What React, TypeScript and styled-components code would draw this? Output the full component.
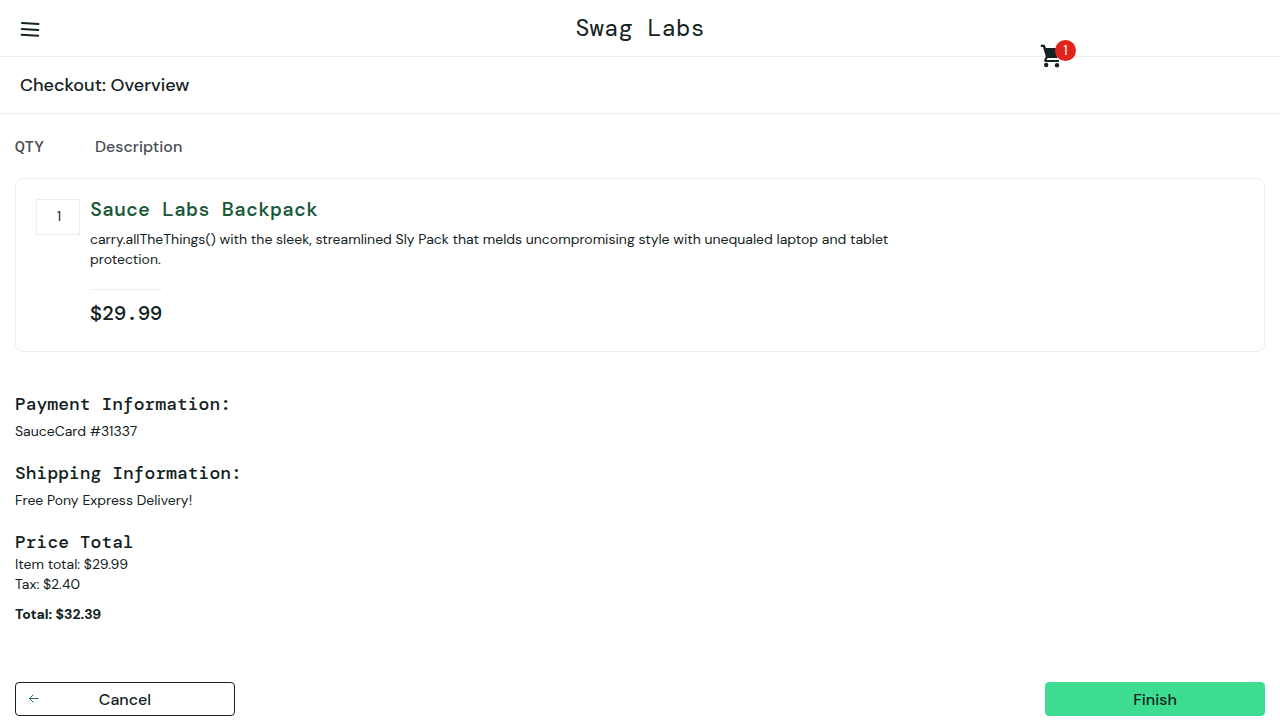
import React from "react";
import styled, { createGlobalStyle } from "styled-components";

const ink = "#132322";
const line = "#ededed";
const sans = `"DM Sans", Inter, "Liberation Sans", sans-serif`;
const mono = `"DM Mono", "Liberation Mono", monospace`;

const GlobalStyle = createGlobalStyle`
  *, *::before, *::after { box-sizing: border-box; }
  body {
    margin: 0;
    background: #fff;
    color: ${ink};
    font-family: ${sans};
    font-size: 14px;
    line-height: 20px;
  }
  h1, h2, h3, p { margin: 0; }
`;

const Header = styled.header`
  position: relative;
  display: grid;
  grid-template-columns: 1fr auto 1fr;
  align-items: center;
  height: 57px;
  padding: 0 20px;
  border-bottom: 1px solid ${line};
`;

const MenuButton = styled.button`
  justify-self: start;
  display: flex;
  margin-top: 2px;
  padding: 0;
  border: 0;
  background: none;
  cursor: pointer;
`;

const Logo = styled.div`
  font-family: ${mono};
  font-size: 24px;
  line-height: 32px;
`;

const CartLink = styled.a`
  position: absolute;
  top: 40px;
  right: 200px;
  width: 40px;
  height: 30px;
  color: ${ink};
  text-decoration: none;

  svg { display: block; margin-top: 4px; }
`;

const CartBadge = styled.span`
  position: absolute;
  top: 0;
  left: 15px;
  width: 21px;
  height: 21px;
  border-radius: 50%;
  background: #e2231a;
  color: #fff;
  line-height: 21px;
  text-align: center;
`;

const SubHeader = styled.div`
  display: flex;
  align-items: center;
  height: 57px;
  padding: 0 20px;
  border-bottom: 1px solid ${line};
`;

const PageTitle = styled.h1`
  font-size: 18px;
  line-height: 24px;
  font-weight: 500;
`;

const Main = styled.main`
  padding: 0 15px 4px;
`;

const ColumnLabels = styled.div`
  display: flex;
  padding: 23px 0 21px;
  color: #484c55;
  font-size: 16px;
  font-weight: 500;
`;

const QuantityLabel = styled.div`
  width: 80px;
  font-family: ${mono};
`;

const Item = styled.article`
  display: flex;
  align-items: flex-start;
  gap: 10px;
  padding: 20px;
  border: 1px solid ${line};
  border-radius: 8px;
`;

const Quantity = styled.div`
  flex: none;
  width: 44px;
  padding: 6px 10px 8px 12px;
  border: 1px solid ${line};
  text-align: center;
`;

const ItemBody = styled.div`
  max-width: 820px;
`;

const ItemLink = styled.a`
  display: block;
  color: #185837;
  font-family: ${mono};
  font-size: 20px;
  font-weight: 500;
  text-decoration: none;
`;

const Blurb = styled.p`
  padding: 10px 0 20px;
`;

const Price = styled.div`
  width: fit-content;
  padding: 13px 0 8px;
  border-top: 1px solid ${line};
  font-family: ${mono};
  font-size: 20px;
  font-weight: 500;
`;

const Summary = styled.div`
  padding: 42px 0 58px;
`;

const Section = styled.section<{ $gap: number }>`
  display: flex;
  flex-direction: column;

  & + & { margin-top: 22px; }
  h2 { margin-bottom: ${(p) => p.$gap}px; }
`;

const SectionTitle = styled.h2`
  font-family: ${mono};
  font-size: 18px;
  line-height: 20px;
  font-weight: 500;
`;

const Total = styled.p`
  margin-top: 10px;
  font-weight: 800;
`;

const Actions = styled.div`
  display: flex;
  justify-content: space-between;
`;

const ActionButton = styled.button<{ $primary?: boolean }>`
  display: grid;
  grid-template-columns: 12px 1fr 12px;
  align-items: center;
  width: 220px;
  height: 34px;
  padding: 0 12px;
  border: 1px solid ${(p) => (p.$primary ? "#3ddc91" : ink)};
  border-radius: 4px;
  background: ${(p) => (p.$primary ? "#3ddc91" : "#fff")};
  color: ${ink};
  font-family: ${sans};
  font-size: 16px;
  font-weight: 500;
  cursor: pointer;

  span { grid-column: 2; }
`;

export default function App() {
  return (
    <>
      <GlobalStyle />
      <Header>
        <MenuButton aria-label="Open Menu">
          <svg width="20" height="18" viewBox="0 0 20 18" fill="none" stroke={ink} strokeWidth="2" strokeLinecap="round">
            <path d="M2 3 18.500 4M1.800 9 18.300 9.900M1.600 14.800 18.200 15.800" />
          </svg>
        </MenuButton>
        <Logo>Swag Labs</Logo>
        <CartLink href="#cart" aria-label="Cart, 1 item">
          <svg width="22" height="25" viewBox="0 0 22 25" fill={ink}>
            <path d="M.8 .8H4.600L6 4H20L17 14H7.500L6.500 16H19V18H5.500Q3.400 17.500 4.200 15.800L5.800 12.500 3 3H.8Z" />
            <circle cx="6.200" cy="21" r="2.200" />
            <circle cx="17" cy="21.300" r="2.200" />
          </svg>
          <CartBadge>1</CartBadge>
        </CartLink>
      </Header>
      <SubHeader>
        <PageTitle>Checkout: Overview</PageTitle>
      </SubHeader>
      <Main>
        <ColumnLabels>
          <QuantityLabel>QTY</QuantityLabel>
          <div>Description</div>
        </ColumnLabels>
        <Item>
          <Quantity>1</Quantity>
          <ItemBody>
            <ItemLink href="#item">Sauce Labs Backpack</ItemLink>
            <Blurb>
              carry.allTheThings() with the sleek, streamlined Sly Pack that melds uncompromising style with unequaled
              laptop and tablet protection.
            </Blurb>
            <Price>$29.99</Price>
          </ItemBody>
        </Item>
        <Summary>
          <Section $gap={7}>
            <SectionTitle>Payment Information:</SectionTitle>
            <p>SauceCard #31337</p>
          </Section>
          <Section $gap={7}>
            <SectionTitle>Shipping Information:</SectionTitle>
            <p>Free Pony Express Delivery!</p>
          </Section>
          <Section $gap={2}>
            <SectionTitle>Price Total</SectionTitle>
            <p>Item total: $29.99</p>
            <p>Tax: $2.40</p>
            <Total>Total: $32.39</Total>
          </Section>
        </Summary>
        <Actions>
          <ActionButton type="button">
            <svg width="12" height="12" viewBox="0 0 12 12" fill="none" stroke="#287350">
              <path d="M10.500 5.500H1.500M5.500 1.500 1.500 5.500 5.500 9.500" />
            </svg>
            <span>Cancel</span>
          </ActionButton>
          <ActionButton type="button" $primary>
            <span>Finish</span>
          </ActionButton>
        </Actions>
      </Main>
    </>
  );
}
